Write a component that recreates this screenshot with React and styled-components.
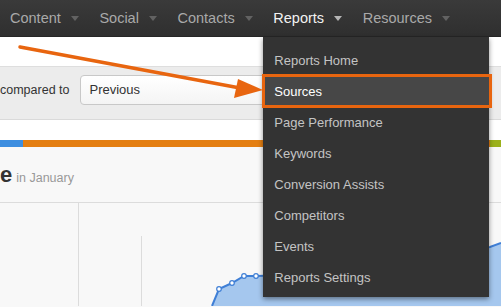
import React from "react";
import styled, { createGlobalStyle } from "styled-components";

const GlobalStyle = createGlobalStyle`
  html, body {
    margin: 0;
    padding: 0;
    background: #ffffff;
    overflow: hidden;
  }
  * { box-sizing: border-box; }
`;

const navItems = ["Content", "Social", "Contacts", "Reports", "Resources"];
const reportLinks = [
  "Reports Home",
  "Sources",
  "Page Performance",
  "Keywords",
  "Conversion Assists",
  "Competitors",
  "Events",
  "Reports Settings",
];

// area chart points, relative to the chart panel
const chartPoints = [
  [219, 86],
  [232, 80],
  [244, 73],
  [256, 73],
  [290, 72],
  [330, 66],
  [370, 60],
  [410, 56],
  [450, 50],
  [490, 44],
  [501, 40],
];

const App = () => {
  const line = chartPoints.map(([x, y]) => `${x},${y}`).join(" L");
  const area = `M212,103 L${line} L501,103 Z`;

  return (
    <Page>
      <GlobalStyle />
      <NavBar>
        {navItems.map((item) => (
          <NavItem key={item} $active={item === "Reports"}>
            <span>{item}</span>
            <Caret $active={item === "Reports"} />
            {item === "Reports" && (
              <Menu>
                {reportLinks.map((link) => (
                  <MenuItem key={link} $selected={link === "Sources"}>
                    {link}
                  </MenuItem>
                ))}
              </Menu>
            )}
          </NavItem>
        ))}
      </NavBar>

      <Spacer />
      <FilterBar>
        <FilterLabel>compared to</FilterLabel>
        <Select>Previous</Select>
      </FilterBar>
      <Spacer $height={20} />

      <ColorBar>
        <Segment $color="#3d8ee0" style={{ width: 23 }} />
        <Segment $color="#e47f12" style={{ flex: 1 }} />
        <Segment $color="#9bb11b" style={{ width: 11 }} />
      </ColorBar>

      <ChartPanel>
        <Heading>
          <strong>e</strong>
          <small>in January</small>
        </Heading>
        <Chart width="501" height="103" viewBox="0 0 501 103">
          <line x1="78.5" y1="0" x2="78.5" y2="103" stroke="#dcdcdc" />
          <line x1="141.5" y1="33" x2="141.5" y2="103" stroke="#dcdcdc" />
          <path d={area} fill="#a5c7ee" />
          <path d={`M212,103 L${line}`} fill="none" stroke="#3f7fd6" strokeWidth="2" />
          {chartPoints.slice(0, 4).map(([x, y]) => (
            <circle key={x} cx={x} cy={y} r="2.3" fill="#fff" stroke="#3f7fd6" strokeWidth="1.2" />
          ))}
        </Chart>
      </ChartPanel>

      <Arrow width="501" height="307" viewBox="0 0 501 307">
        <line x1="20" y1="47" x2="240" y2="88" stroke="#e8650f" strokeWidth="3.5" strokeLinecap="round" />
        <polygon points="238,79 234,98 263,90" fill="#e8650f" />
      </Arrow>
    </Page>
  );
};

const Page = styled.div`
  position: relative;
  width: 501px;
  height: 307px;
  overflow: hidden;
  font-family: "Liberation Sans", Arial, sans-serif;
  background: #ffffff;
`;

const NavBar = styled.nav`
  display: flex;
  height: 37px;
  background: linear-gradient(#3a3a3a, #2f2f2f);
  border-bottom: 1px solid #262626;
`;

const NavItem = styled.div`
  position: relative;
  display: flex;
  align-items: center;
  gap: 10px;
  padding: 0 10.6px 0 10px;
  font-size: 14.5px;
  color: ${(p) => (p.$active ? "#f2f2f2" : "#a9a9a9")};
  z-index: ${(p) => (p.$active ? 2 : 1)};
`;

const Caret = styled.i`
  width: 0;
  height: 0;
  margin-top: 1px;
  border-left: 4.5px solid transparent;
  border-right: 4.5px solid transparent;
  border-top: 5px solid ${(p) => (p.$active ? "#b5b5b5" : "#626262")};
`;

const Menu = styled.ul`
  position: absolute;
  top: 37px;
  left: 0;
  width: 226px;
  margin: 0;
  padding: 8px 0 4px;
  list-style: none;
  background: #333333;
  box-shadow: 0 2px 5px rgba(0, 0, 0, 0.45);
`;

const MenuItem = styled.li`
  position: relative;
  height: 31px;
  line-height: 31px;
  padding-left: 11px;
  font-size: 13px;
  color: ${(p) => (p.$selected ? "#ffffff" : "#c4c4c4")};
  background: ${(p) => (p.$selected ? "#474747" : "transparent")};

  &::after {
    content: "";
    display: ${(p) => (p.$selected ? "block" : "none")};
    position: absolute;
    top: -2px;
    bottom: -1px;
    left: -1px;
    right: -3px;
    border: 3px solid #e8650f;
  }
`;

const Spacer = styled.div`
  height: ${(p) => p.$height ?? 29}px;
  background: #ffffff;
`;

const FilterBar = styled.div`
  display: flex;
  align-items: center;
  gap: 11px;
  height: 54px;
  padding: 0 0 7px 0;
  background: #ececec;
  border-top: 1px solid #dedede;
  border-bottom: 1px solid #dadada;
`;

const FilterLabel = styled.span`
  font-size: 12.5px;
  color: #333333;
`;

const Select = styled.div`
  width: 260px;
  height: 30px;
  line-height: 28px;
  padding-left: 8px;
  font-size: 13px;
  color: #333333;
  background: linear-gradient(#ffffff, #f4f4f4);
  border: 1px solid #c8c8c8;
  border-radius: 4px;
`;

const ColorBar = styled.div`
  display: flex;
  height: 7px;
`;

const Segment = styled.div`
  background: ${(p) => p.$color};
`;

const ChartPanel = styled.div`
  background: #f8f8f8;
  height: 160px;
`;

const Heading = styled.div`
  display: flex;
  align-items: baseline;
  gap: 4px;
  height: 56px;
  padding-top: 15px;
  border-bottom: 1px solid #dcdcdc;

  strong {
    font-size: 22px;
    color: #333333;
  }

  small {
    font-size: 12.5px;
    color: #999999;
  }
`;

const Chart = styled.svg`
  display: block;
`;

const Arrow = styled.svg`
  position: absolute;
  top: 0;
  left: 0;
  pointer-events: none;
  z-index: 3;
`;

export default App;
